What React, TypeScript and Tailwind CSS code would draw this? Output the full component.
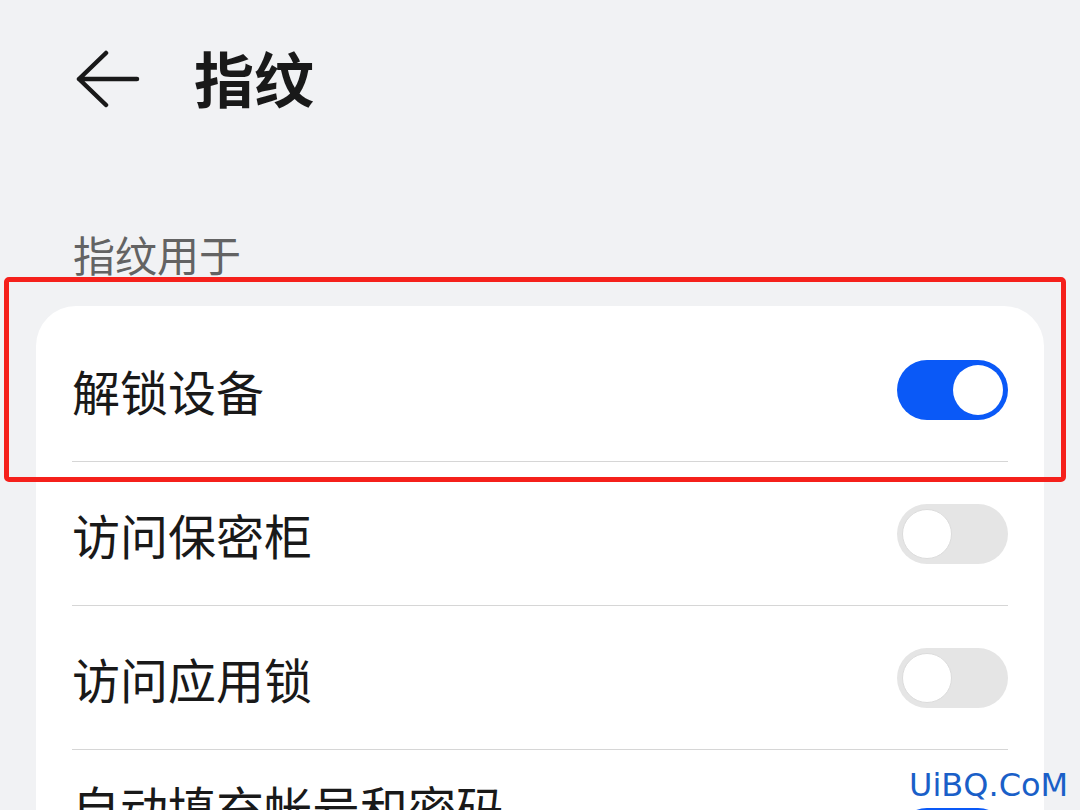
import React from "react";

const font = { fontFamily: '"Noto Sans CJK SC", "Noto Sans", sans-serif' };

function Toggle({ on }: { on: boolean }) {
  return on ? (
    <div className="relative w-[111px] h-[60px] rounded-full bg-[#0a59f7] shrink-0">
      <div className="absolute right-[5px] top-[5px] w-[50px] h-[50px] rounded-full bg-white" />
    </div>
  ) : (
    <div className="relative w-[111px] h-[60px] rounded-full bg-[#e5e5e5] shrink-0">
      <div className="absolute left-[5px] top-[5px] w-[50px] h-[50px] rounded-full bg-white border border-[#dcdcdc]" />
    </div>
  );
}

function Row({ label, on }: { label: string; on: boolean }) {
  return (
    <div className="h-[144px] flex items-center justify-between border-b border-[#d6d6d6]">
      <span className="text-[48px] leading-[48px] text-[#191919]">{label}</span>
      <Toggle on={on} />
    </div>
  );
}

export default function App() {
  return (
    <div className="relative w-[1080px] h-[810px] overflow-hidden bg-[#f1f2f4]" style={font}>
      <div className="h-[158px] flex items-center">
        <svg className="ml-[76px]" width="64" height="58" viewBox="0 0 64 58" fill="none">
          <path d="M30 3 L3 29 L30 55 M3 29 H61" stroke="#191919" strokeWidth="4.5" strokeLinecap="round" strokeLinejoin="round" />
        </svg>
        <span className="ml-[54px] -mt-[5px] text-[60px] leading-[60px] font-bold text-[#191919]">指纹</span>
      </div>
      <div className="mt-[75px] ml-[73px] text-[42px] leading-[42px] text-[#636363]">指纹用于</div>
      <div className="mt-[31px] mx-[36px] bg-white rounded-[40px] pt-[12px] px-[36px] h-[600px]">
        <Row label="解锁设备" on={true} />
        <Row label="访问保密柜" on={false} />
        <Row label="访问应用锁" on={false} />
        <div className="flex items-start justify-between pt-[32px]">
          <div className="flex flex-col">
            <span className="text-[48px] leading-[48px] text-[#191919]">自动填充帐号和密码</span>
            <span className="mt-[14px] text-[36px] leading-[40px] text-[#888]">在应用中自动填充帐号和密码</span>
          </div>
          <div className="mt-[26px]">
            <Toggle on={true} />
          </div>
        </div>
      </div>
      <div className="absolute left-[4px] top-[277px] w-[1062px] h-[205px] border-[5px] border-[#f5201b] rounded-[5px]" />
      <div
        className="absolute left-[909px] top-[765px] text-[32px] leading-[40px] text-[#1a5fc8]"
        style={{ fontFamily: '"DejaVu Sans", sans-serif' }}
      >
        UiBQ.CoM
      </div>
    </div>
  );
}
